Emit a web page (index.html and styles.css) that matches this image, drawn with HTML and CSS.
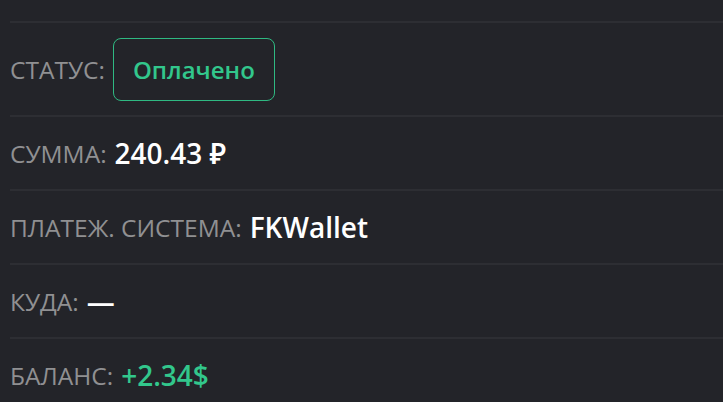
FILE: index.html
```html
<!DOCTYPE html>
<html lang="ru">
<head>
  <meta charset="UTF-8">
  <meta name="viewport" content="width=device-width, initial-scale=1.0">
  <title>Платёж</title>
  <link rel="stylesheet" href="styles.css">
</head>
<body>

  <div class="details">
    <!-- статус -->
    <div class="row row-status">
      <span class="label">СТАТУС:</span>
      <span class="badge">Оплачено</span>
    </div>

    <div class="row">
      <span class="label">СУММА:</span>
      <span class="value">240.43 ₽</span>
    </div>

    <div class="row">
      <span class="label">ПЛАТЕЖ. СИСТЕМА:</span>
      <span class="value">FKWallet</span>
    </div>

    <div class="row">
      <span class="label">КУДА:</span>
      <span class="value">—</span>
    </div>

    <div class="row">
      <span class="label">БАЛАНС:</span>
      <span class="value green">+2.34$</span>
    </div>
  </div>

</body>
</html>
```

FILE: styles.css
```css
body {
  margin: 0;
  padding: 0;
  background-color: #232429;
  font-family: "Open Sans", "Noto Sans", sans-serif;
  overflow: hidden;
}
.details {
  padding: 21px 0 0 10px;
}
.row {
  display: flex;
  align-items: center;
  gap: 8px;
  border-top: 2px solid #2d2e33;
  height: 72px;
}
.row-status {
  height: 92px;
}
.label {
  font-size: 24.5px;
  color: #909092;
}
.value {
  font-size: 28px;
  font-weight: 600;
  color: #ffffff;
}
.green {
  color: #32c78c;
}
.badge {
  padding: 0 19px;
  height: 61px;
  display: flex;
  align-items: center;
  border: 1px solid #2fb982;
  border-radius: 8px;
  font-size: 24px;
  font-weight: 600;
  color: #32c78c;
}
```
